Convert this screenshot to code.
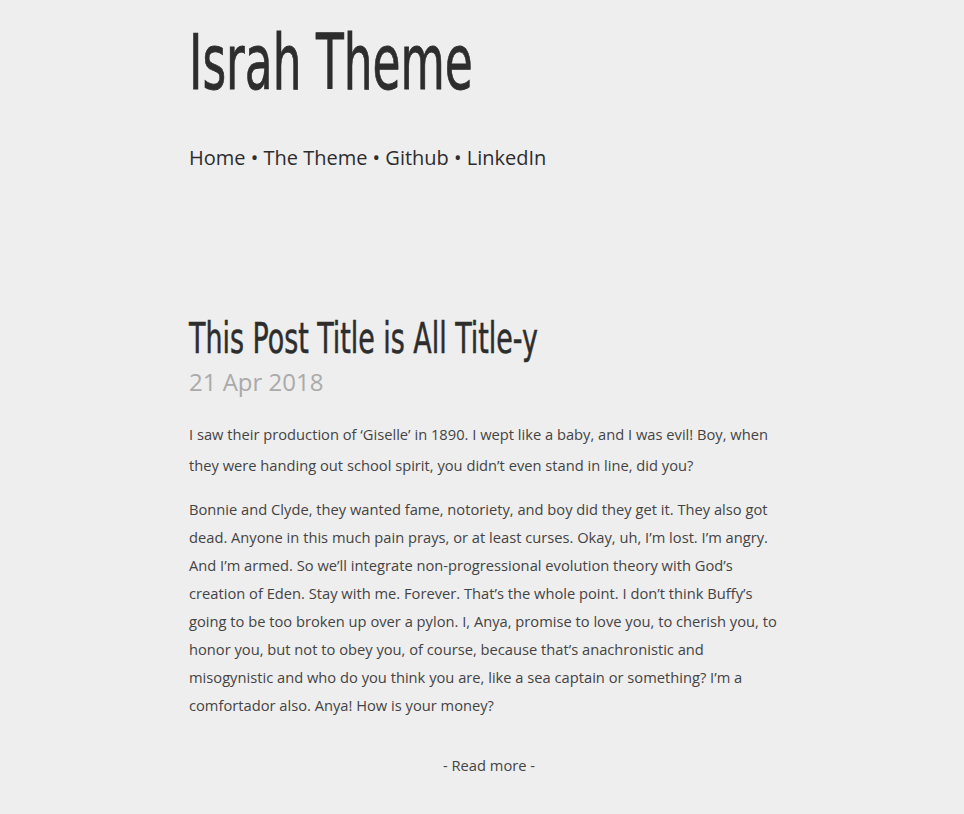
import React from "react";

const headFont = { fontFamily: '"Liberation Sans Narrow", "DejaVu Sans Condensed", sans-serif' };

const paragraphs = [
  "Bonnie and Clyde, they wanted fame, notoriety, and boy did they get it. They also got dead. Anyone in this much pain prays, or at least curses. Okay, uh, I\u2019m lost. I\u2019m angry. And I\u2019m armed. So we\u2019ll integrate non-progressional evolution theory with God\u2019s creation of Eden. Stay with me. Forever. That\u2019s the whole point. I don\u2019t think Buffy\u2019s going to be too broken up over a pylon. I, Anya, promise to love you, to cherish you, to honor you, but not to obey you, of course, because that\u2019s anachronistic and misogynistic and who do you think you are, like a sea captain or something? I\u2019m a comfortador also. Anya! How is your money?",
];

export default function App() {
  return (
    <div className="min-h-screen bg-[#eeeeee] text-[#444444] font-['Open_Sans',sans-serif]">
      <div className="w-[600px] ml-[189px]">
        {/* Header */}
        <header className="pt-[17px]">
          <h1 className="text-[#2d2d2d] text-[76px] leading-[86px] whitespace-nowrap">
            <span
              className="inline-block origin-left scale-x-[0.665] [-webkit-text-stroke:0.8px_#2d2d2d]"
              style={headFont}
            >
              Israh Theme
            </span>
          </h1>
          <nav className="mt-[38px] text-[20px] leading-[28px] text-[#2d2d2d]">
            <a>Home</a> • <a>The Theme</a> • <a>Github</a> • <a>LinkedIn</a>
          </nav>
        </header>

        {/* Post */}
        <article className="mt-[141px]">
          <h2 className="text-[#2d2d2d] text-[42px] leading-[48px] whitespace-nowrap">
            <span
              className="inline-block origin-left scale-x-[0.712] [-webkit-text-stroke:0.5px_#2d2d2d]"
              style={headFont}
            >
              This Post Title is All Title-y
            </span>
          </h2>
          <div className="mt-[3px] text-[24px] leading-[32px] text-[#aaaaaa]">21 Apr 2018</div>

          <p className="mt-[21px] text-[14.7px] leading-[31px]">
            I saw their production of ‘Giselle’ in 1890. I wept like a baby, and I was evil! Boy, when they were
            handing out school spirit, you didn’t even stand in line, did you?
          </p>
          {paragraphs.map((t, i) => (
            <p key={i} className="mt-[14px] text-[14.7px] leading-[28px]">
              {t}
            </p>
          ))}

          <div className="mt-[32px] text-center text-[14.7px] leading-[28px]">- Read more -</div>
        </article>
      </div>
    </div>
  );
}
